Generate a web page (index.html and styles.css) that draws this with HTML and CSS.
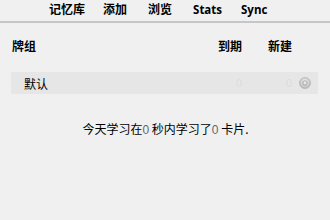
FILE: index.html
```html
<!DOCTYPE html>
<html>
<head>
<meta charset="utf-8">
<link rel="stylesheet" href="styles.css">
</head>
<body>
<div class="toolbar">
  <span class="tab t1">记忆库</span>
  <span class="tab t2">添加</span>
  <span class="tab t3">浏览</span>
  <span class="tab t4">Stats</span>
  <span class="tab t5">Sync</span>
</div>
<div class="content">
  <div class="head">
    <span class="deckh">牌组</span>
    <span class="due">到期</span>
    <span class="new">新建</span>
  </div>
  <div class="deck">
    <span class="name">默认</span>
    <span class="num n1">0</span>
    <span class="num n2">0</span>
    <span class="gear">
      <svg width="12" height="12" viewBox="0 0 12 12">
        <defs>
          <radialGradient id="g" cx="0.5" cy="0.4" r="0.6">
            <stop offset="0" stop-color="#f4f4f4"/>
            <stop offset="1" stop-color="#b8b8b8"/>
          </radialGradient>
        </defs>
        <circle cx="6" cy="6" r="5.5" fill="url(#g)" stroke="#aaa" stroke-width="0.6"/>
        <circle cx="6" cy="6" r="2.2" fill="none" stroke="#9a9a9a" stroke-width="0.8"/>
      </svg>
    </span>
  </div>
  <p class="summary">今天学习在<span class="d">0</span> 秒内学习了<span class="d">0</span> 卡片.</p>
</div>
</body>
</html>
```
FILE: styles.css
```css
html, body {
  margin: 0;
  padding: 0;
  background: #f0f0f0;
  font-family: "Noto Sans CJK SC", "Liberation Sans", sans-serif;
  font-size: 12px;
  color: #000;
}
.toolbar {
  display: flex;
  height: 21px;
  align-items: center;
  padding-left: 49px;
  border-bottom: 2px solid #c6c6c6;
  font-weight: bold;
  font-family: "Open Sans", "Noto Sans CJK SC", sans-serif;
}
.toolbar .tab {
  line-height: 14px;
  margin-top: -1px;
}
.t2 { margin-left: 18px; }
.t3 { margin-left: 21px; }
.t4 { margin-left: 21px; }
.t5 { margin-left: 19px; }
.t4, .t5 { font-size: 11.5px; }
.content {
  padding: 0 12px 0 11px;
}
.head {
  display: flex;
  align-items: center;
  height: 20px;
  margin-top: 12px;
  padding-left: 1px;
  font-weight: bold;
}
.deckh { flex: 1; }
.due { width: 50px; }
.new { width: 50px; }
.deck {
  display: flex;
  align-items: center;
  height: 22px;
  margin-top: 17px;
  background: #e6e6e6;
}
.name {
  flex: 1;
  padding-left: 13px;
}
.num {
  color: #dcdcdc;
  font-family: "Liberation Sans", sans-serif;
  font-size: 11px;
}
.n1 { width: 50px; }
.n2 { width: 13px; }
.gear {
  width: 19px;
  display: flex;
  align-items: center;
}
.gear svg { display: block; }
.summary {
  margin: 26px 0 0;
  text-align: center;
  padding-left: 2px;
}
.summary .d {
  color: #666;
  font-family: "Liberation Sans", sans-serif;
}
```
